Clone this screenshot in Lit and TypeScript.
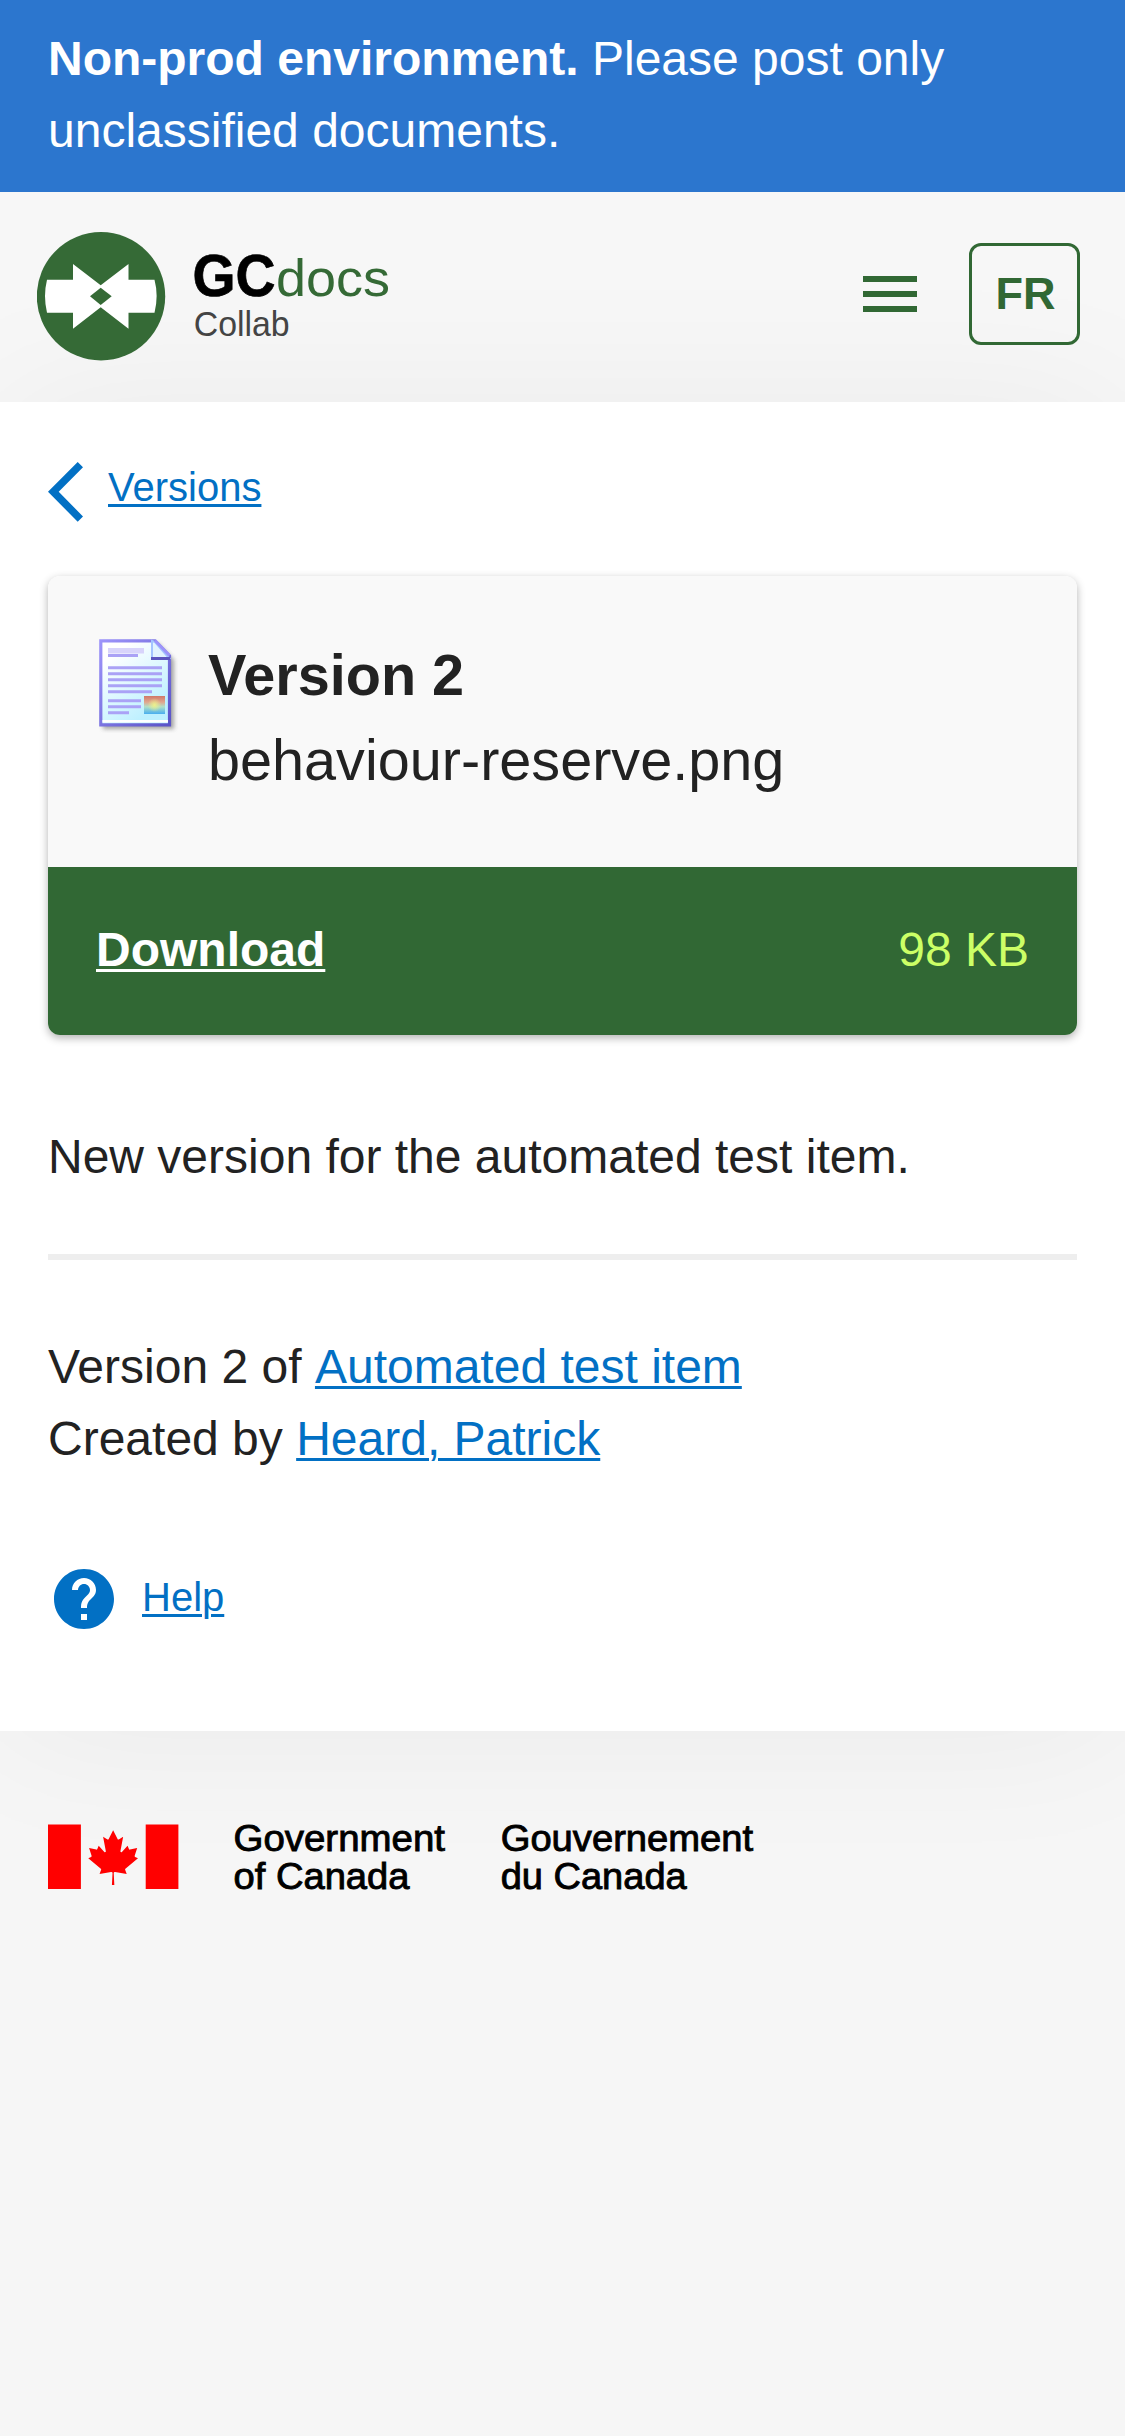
import { LitElement, html, css } from "lit";
import { customElement } from "lit/decorators.js";

@customElement("app-root")
export class AppRoot extends LitElement {
  static styles = css`
    :host { display: block; min-height: 2436px; background: #f6f6f6; color: #222; font: 48px/72px "Liberation Sans", Arial, sans-serif; }
    * { box-sizing: border-box; }
    p, h1 { margin: 0; }
    svg { display: block; flex: none; }
    a { color: #0270c4; text-decoration: underline; text-decoration-thickness: 3px; text-underline-offset: 3px; }
    .banner { background: #2c76ce; color: #fff; padding: 23px 48px 25px; }
    .header { height: 210px; background: #f7f7f7; display: flex; align-items: center; justify-content: space-between; padding: 0 45px 0 37px; }
    .actions { display: flex; align-items: center; gap: 52px; margin-top: -6px; }
    .menu { display: grid; gap: 9px; }
    .menu span { width: 54px; height: 6px; background: #316834; }
    .lang { width: 111px; height: 102px; border: 3px solid #316834; border-radius: 12px; display: flex; align-items: center; justify-content: center; padding-left: 2px; font-size: 45px; font-weight: bold; color: #316834; text-decoration: none; }
    .main { height: 1329px; background: #fff; padding: 60px 48px 0; box-shadow: 0 0 150px rgba(0, 0, 0, 0.05); }
    .back { display: flex; gap: 25px; height: 60px; font-size: 40px; line-height: 50px; }
    .card { margin-top: 54px; border-radius: 12px; overflow: hidden; box-shadow: 0 3px 9px rgba(0, 0, 0, 0.3); }
    .info { height: 291px; background: #f9f9f9; padding: 57px 48px 0; display: flex; gap: 12px; }
    .names { font-size: 57.6px; line-height: 85px; }
    .names h1 { font: inherit; font-weight: bold; }
    .download { background: #316834; color: #cf6; padding: 47px 48px 49px; display: flex; justify-content: space-between; }
    .download a { color: #fff; font-weight: bold; }
    .desc { margin-top: 86px; }
    .rule { height: 6px; background: #eee; margin: 61px 0 71px; }
    .item { margin-left: 0.1px; }
    .help { display: flex; align-items: center; gap: 22px; margin-top: 88px; font-size: 40px; }
    .help span { margin-top: -4px; }
    .footer { padding: 88px 48px 0; }
  `;

  render() {
    return html`
      <div class="banner"><b>Non-prod environment.</b> Please post only<br />unclassified documents.</div>
      <header class="header">
        <svg width="360" height="130" viewBox="0 0 360 130" font-family="Liberation Sans, Arial, sans-serif">
          <circle cx="64" cy="64.3" r="64.2" fill="#356a36" />
          <path fill="#fff" d="M36 32 63.7 53.3 91.5 32V47.8H117.5Q121.8 64 117.5 80.7H91.5V96.7L63.7 75.3 36 96.7V80.7H10Q6 64 10 47.8H36Z" />
          <path fill="#356a36" d="M63.7 55.7 74.7 64.3 63.7 73 53 64.3Z" />
          <text x="155.5" y="63.7" font-size="58.5" font-weight="bold" fill="#000" stroke="#000" stroke-width=".7" textLength="83" lengthAdjust="spacingAndGlyphs">GC</text>
          <text x="239" y="64" font-size="52" fill="#356a36" textLength="114" lengthAdjust="spacingAndGlyphs">docs</text>
          <text x="156.7" y="104" font-size="34.5" fill="#444" textLength="96" lengthAdjust="spacingAndGlyphs">Collab</text>
        </svg>
        <div class="actions">
          <div class="menu"><span></span><span></span><span></span></div>
          <a class="lang" href="#">FR</a>
        </div>
      </header>
      <main class="main">
        <div class="back">
          <svg width="35" height="60" viewBox="0 0 35 60"><path fill="#0270c4" d="M29.7 0 35 5.3 10.7 29.7 35 54.5 29.7 59.8 0 29.7Z" /></svg>
          <a href="#">Versions</a>
        </div>
        <section class="card">
          <div class="info">
            <svg width="100" height="100" viewBox="96 633 100 100">
              <defs>
                <linearGradient id="paper" x1="0" y1="0" x2=".6" y2="1"><stop offset=".2" stop-color="#fff" /><stop offset=".95" stop-color="#bdf0ff" /></linearGradient>
                <linearGradient id="edge" x1="0" y1="0" x2="1" y2="1"><stop stop-color="#9d94fa" /><stop offset="1" stop-color="#5a54c8" /></linearGradient>
                <linearGradient id="photo" x1="0" y1="0" x2="0" y2="1"><stop stop-color="#d07868" /><stop offset=".35" stop-color="#e0a890" /><stop offset=".6" stop-color="#b0e0c8" /><stop offset="1" stop-color="#48aef0" /></linearGradient>
                <radialGradient id="sun"><stop stop-color="#eef08a" /><stop offset="1" stop-color="#eef08a" stop-opacity="0" /></radialGradient>
                <filter id="soft" x="-20%" y="-20%" width="140%" height="140%"><feGaussianBlur stdDeviation="2" /></filter>
              </defs>
              <path fill="#777" opacity=".65" filter="url(#soft)" d="M103 643H158L174 660V729H103Z" />
              <path fill="url(#paper)" stroke="url(#edge)" stroke-width="3.2" d="M100.8 640.8H155L169.5 656V724.8H100.8Z" />
              <path fill="#fff" d="M102.5 720H168V722.5H102.5Z" />
              <path fill="#e2f3ff" stroke="#a4c4ff" stroke-width="2" d="M152 641V658H169L155 642Z" />
              <path fill="none" stroke="#5c55bf" stroke-width="2.8" d="M151 658.5H170" />
              <path fill="none" stroke="#9d94fa" stroke-width="3" d="M155 640.5 169.5 655.5" />
              <path stroke="#d8d4fb" stroke-width="5.5" d="M108 650.7H144" />
              <path stroke="#aaa2f6" stroke-width="3" d="M108 655.5H138M108 667.7H162M108 673.7H162M108 679.7H162M108 685.7H162M108 691.7H152M108 700.7H141M108 706.7H141M108 712.7H129" />
              <rect x="144" y="696" width="21" height="18" fill="url(#photo)" />
              <circle cx="154.5" cy="705" r="7" fill="url(#sun)" />
            </svg>
            <div class="names"><h1>Version 2</h1><p>behaviour-reserve.png</p></div>
          </div>
          <div class="download"><a href="#">Download</a><span>98 KB</span></div>
        </section>
        <p class="desc">New version for the automated test item.</p>
        <div class="rule"></div>
        <p>Version 2 of <a class="item" href="#">Automated test item</a><br />Created by <a href="#">Heard, Patrick</a></p>
        <div class="help">
          <svg width="72" height="72" viewBox="0 0 24 24"><path fill="#0270c4" d="M12 2C6.48 2 2 6.48 2 12s4.48 10 10 10 10-4.48 10-10S17.52 2 12 2zm1 17h-2v-2h2v2zm2.07-7.75l-.9.92C13.45 12.9 13 13.5 13 15h-2v-.5c0-1.1.45-2.1 1.17-2.83l1.24-1.26c.37-.36.59-.86.59-1.41 0-1.1-.9-2-2-2s-2 .9-2 2H8c0-2.21 1.79-4 4-4s4 1.79 4 4c0 .88-.36 1.68-.93 2.25z" /></svg>
          <span><a href="#">Help</a></span>
        </div>
      </main>
      <footer class="footer">
        <svg width="720" height="90" viewBox="48 1819 720 90" font-family="Liberation Sans, Arial, sans-serif" font-size="36.5" stroke="#000" stroke-width=".9">
          <g fill="#f00" stroke="none">
            <path d="M48 1824.6H80.9V1889H48ZM145.7 1824.6H178.4V1889H145.7Z" />
            <path transform="translate(49 1824.7) scale(.01336 .01362)" d="m4890 4430-45-863a95 95 0 0 1 111-98l859 151-116-320a65 65 0 0 1 20-73l941-762-212-99a65 65 0 0 1-34-79l186-572-542 115a65 65 0 0 1-73-38l-105-247-423 454a65 65 0 0 1-111-57l204-1052-327 189a65 65 0 0 1-91-27l-332-652-332 652a65 65 0 0 1-91 27l-327-189 204 1052a65 65 0 0 1-111 57l-423-454-105 247a65 65 0 0 1-73 38l-542-115 186 572a65 65 0 0 1-34 79l-212 99 941 762a65 65 0 0 1 20 73l-116 320 859-151a95 95 0 0 1 111 98l-45 863z" />
          </g>
          <text x="233.5" y="1851" textLength="211.5" lengthAdjust="spacingAndGlyphs">Government</text>
          <text x="233.5" y="1889" textLength="176" lengthAdjust="spacingAndGlyphs">of Canada</text>
          <text x="500.7" y="1851" textLength="252.5" lengthAdjust="spacingAndGlyphs">Gouvernement</text>
          <text x="500.7" y="1889" textLength="186" lengthAdjust="spacingAndGlyphs">du Canada</text>
        </svg>
      </footer>
    `;
  }
}
